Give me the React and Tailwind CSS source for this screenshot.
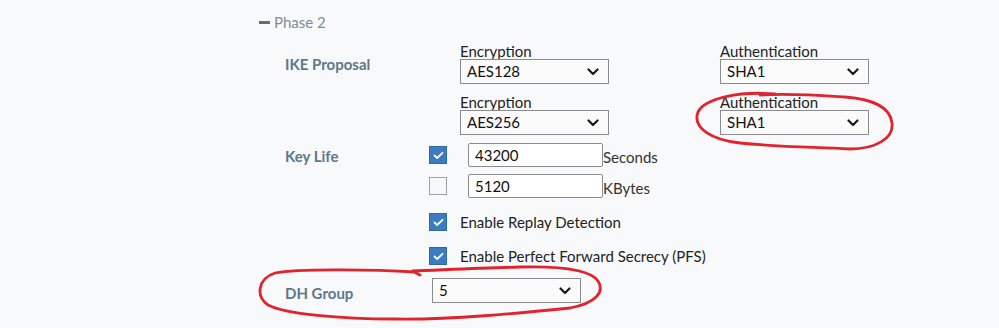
import React from 'react';

function Chevron() {
  return (
    <svg width="12" height="8" viewBox="0 0 12 8" className="shrink-0">
      <path d="M1.5 1.5 L6 6 L10.5 1.5" fill="none" stroke="#1a1a1a" strokeWidth="2.2" strokeLinecap="round" strokeLinejoin="round" />
    </svg>
  );
}

function Select({ value, className = '' }) {
  return (
    <div className={`h-[25px] w-[149px] border border-[#8c8c8c] bg-[#fbfbfc] flex items-center justify-between pl-[6px] pr-[9px] text-[15px] text-[#111] ${className}`}>
      <span>{value}</span>
      <Chevron />
    </div>
  );
}

function Checkbox({ checked }) {
  if (!checked) {
    return <div className="w-[18px] h-[18px] shrink-0 border border-[#9aa3ab] bg-[#f7f8fa]" />;
  }
  return (
    <div className="w-[18px] h-[18px] shrink-0 bg-[#3a7cbf] border border-[#2f6aa6] flex items-center justify-center">
      <svg width="11" height="9" viewBox="0 0 11 9">
        <path d="M1.5 4.5 L4.2 7 L9.5 1.8" fill="none" stroke="#fff" strokeWidth="1.8" strokeLinecap="round" strokeLinejoin="round" />
      </svg>
    </div>
  );
}

function Field({ label, value }) {
  return (
    <div className="flex flex-col">
      <span className="text-[15px] leading-[16px] text-[#222]">{label}</span>
      <Select value={value} />
    </div>
  );
}

export default function App() {
  return (
    <div className="relative w-[999px] h-[328px] overflow-hidden bg-[#f8f9fb] font-['Lato','Liberation_Sans',sans-serif]">
      <div className="flex items-center pl-[259px] pt-[13px] h-[31px]">
        <span className="w-[11px] h-[3px] bg-[#5f707e] mr-[4px]" />
        <span className="text-[15px] leading-[18px] text-[#7b8d9c]">Phase 2</span>
      </div>

      <div className="pl-[285px]">
        {/* IKE Proposal */}
        <div className="flex mt-[12px]">
          <div className="w-[144px] pt-[12px] text-[15px] leading-[18px] font-bold text-[#5e7789]">IKE Proposal</div>
          <div className="pl-[31px] flex flex-col gap-[10px]">
            <div className="flex gap-[111px]">
              <Field label="Encryption" value="AES128" />
              <Field label="Authentication" value="SHA1" />
            </div>
            <div className="flex gap-[111px]">
              <Field label="Encryption" value="AES256" />
              <Field label="Authentication" value="SHA1" />
            </div>
          </div>
        </div>

        {/* Key Life */}
        <div className="flex mt-[8px]">
          <div className="w-[144px] pt-[4px] text-[15px] leading-[18px] font-bold text-[#5e7789]">Key Life</div>
          <div className="flex flex-col">
            <div className="flex items-center">
              <Checkbox checked />
              <div className="ml-[21px] w-[135px] h-[24px] border border-[#8c8c8c] rounded-[2px] bg-white pl-[6px] text-[15px] leading-[22px] text-[#111]">43200</div>
              <span className="mt-[4px] text-[15px] leading-[18px] text-[#333]">Seconds</span>
            </div>
            <div className="flex items-center mt-[7px]">
              <Checkbox />
              <div className="ml-[21px] w-[135px] h-[24px] border border-[#8c8c8c] rounded-[2px] bg-white pl-[6px] text-[15px] leading-[22px] text-[#111]">5120</div>
              <span className="mt-[4px] text-[15px] leading-[18px] text-[#333]">KBytes</span>
            </div>
          </div>
        </div>

        <div className="flex items-center ml-[144px] mt-[15px]">
          <Checkbox checked />
          <span className="ml-[13px] text-[15px] leading-[18px] text-[#222]">Enable Replay Detection</span>
        </div>

        <div className="flex items-center ml-[144px] mt-[16px]">
          <Checkbox checked />
          <span className="ml-[13px] text-[15px] leading-[18px] text-[#222]">Enable Perfect Forward Secrecy (PFS)</span>
        </div>

        {/* DH Group */}
        <div className="flex items-center mt-[13px]">
          <div className="w-[147px] pt-[5px] text-[15px] leading-[18px] font-bold text-[#5e7789]">DH Group</div>
          <Select value="5" />
        </div>
      </div>

      {/* hand-drawn annotations */}
      <svg className="absolute inset-0 pointer-events-none" width="999" height="328" viewBox="0 0 999 328">
        <path
          d="M775 94 C740 91 705 98 698 112 C692 128 712 140 740 143 C780 147 815 147 850 149 C876 149 894 138 892 123 C890 106 872 99 845 97 C815 95 790 93 760 95"
          fill="none" stroke="#e2222d" strokeWidth="2.8" strokeLinecap="round"
        />
        <path
          d="M415 272 C380 270 300 268 275 273 C257 279 256 297 268 305 C285 314 340 319 395 319 C450 320 520 313 570 308 C596 303 605 292 598 281 C590 269 560 266 520 267 C480 268 440 270 412 271 L420 275"
          fill="none" stroke="#e2222d" strokeWidth="2.8" strokeLinecap="round"
        />
      </svg>
    </div>
  );
}
